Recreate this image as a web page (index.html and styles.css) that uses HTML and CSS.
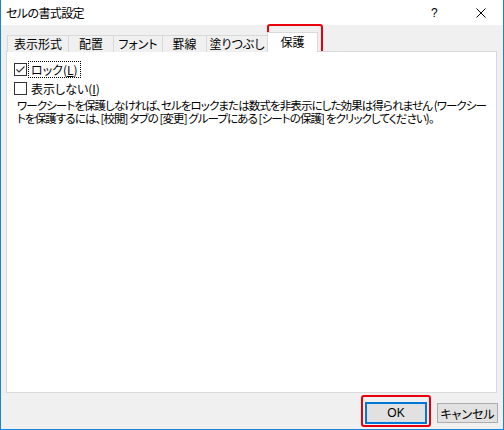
FILE: index.html
```html
<!DOCTYPE html>
<html lang="ja">
<head>
<meta charset="utf-8">
<title>セルの書式設定</title>
<link rel="stylesheet" href="styles.css">
</head>
<body>
<div class="dialog">
  <div class="titlebar">
    <span class="title">セルの書式設定</span>
    <span class="help">?</span>
    <span class="close"><svg width="10" height="10" viewBox="0 0 10 10"><path d="M0.5 0.5 L9.5 9.5 M9.5 0.5 L0.5 9.5" stroke="#000" stroke-width="1" fill="none"/></svg></span>
  </div>
  <div class="content">
    <div class="tabs">
      <div class="tab t1">表示形式</div>
      <div class="tab t2">配置</div>
      <div class="tab t3">フォント</div>
      <div class="tab t4">罫線</div>
      <div class="tab t5">塗りつぶし</div>
      <div class="tab t6 active">保護</div>
    </div>
    <div class="panel">
      <div class="check-row first">
        <span class="box"><svg width="11" height="11" viewBox="0 0 11 11"><path d="M1.5 5.5 L4 8 L9.5 2.5" stroke="#333" stroke-width="1.1" fill="none"/></svg></span>
        <span class="label focus">ロック(<u>L</u>)</span>
      </div>
      <div class="check-row second">
        <span class="box"></span>
        <span class="label">表示しない(<u>I</u>)</span>
      </div>
      <p class="note"><span class="line">ワークシートを保護しなければ、セルをロックまたは数式を非表示にした効果は得られません (ワークシー</span><span class="line">トを保護するには、[校閲] タブの [変更] グループにある [シートの保護] をクリックしてください)。</span></p>
    </div>
    <div class="footer">
      <button class="btn ok">OK</button>
      <button class="btn cancel">キャンセル</button>
    </div>
  </div>
  <div class="mark mark-tab"></div>
  <div class="mark mark-lock"></div>
  <div class="mark mark-ok"></div>
</div>
</body>
</html>
```
FILE: styles.css
```css
* { box-sizing: border-box; }
html, body { margin: 0; padding: 0; background: #fff; }
body {
  font-family: "Noto Sans CJK JP", "Noto Sans", sans-serif;
  font-size: 12px;
  color: #000;
  font-feature-settings: "palt";
}
.dialog {
  position: relative;
  width: 504px;
  height: 430px;
  border-left: 1px solid #1883d7;
  border-right: 1px solid #1883d7;
  border-bottom: 1px solid #1883d7;
  background: #f0f0f0;
  overflow: hidden;
}
.titlebar {
  height: 25px;
  background: #fff;
  display: flex;
  align-items: center;
}
.title {
  padding-left: 5px;
  font-size: 12px;
  line-height: 25px;
  flex: 1;
  padding-bottom: 1px;
  letter-spacing: -0.6px;
}
.help {
  width: 12px;
  font-family: "Liberation Sans", sans-serif;
  font-size: 12px;
  margin-right: 33px;
}
.close {
  display: flex;
  margin-right: 17px;
}
.content {
  padding: 7px 6px 0 5px;
}
.tabs {
  display: flex;
  align-items: flex-end;
  height: 20px;
  padding-left: 1px;
  position: relative;
  z-index: 2;
}
.tab {
  height: 17px;
  border: 1px solid #d9d9d9;
  border-bottom: none;
  background: #f0f0f0;
  margin-left: -1px;
  display: flex;
  align-items: center;
  justify-content: center;
  font-size: 12px;
  line-height: 16px;
}
.tab.t1 { margin-left: 0; width: 62px; }
.tab.t2 { width: 46px; }
.tab.t3 { width: 50px; }
.tab.t4 { width: 45px; }
.tab.t5 { width: 62px; }
.tab.t6 { width: 51px; }
.tab.active {
  height: 20px;
  background: #fff;
  padding-bottom: 1px;
}
.panel {
  position: relative;
  z-index: 1;
  margin-top: -1px;
  height: 342px;
  background: #fff;
  border: 1px solid #d9d9d9;
  padding: 10px 0 0 7px;
}
.check-row {
  display: flex;
  align-items: center;
  height: 15px;
}
.check-row.second { margin-top: 4px; }
.box {
  width: 13px;
  height: 13px;
  border: 1px solid #333;
  background: #fff;
  display: flex;
  align-items: center;
  justify-content: center;
}
.label {
  font-size: 12px;
  line-height: 13px;
  margin-left: 2px;
  padding: 0 2px;
}
.label u { text-decoration: underline; text-underline-offset: 1px; }
.check-row.second .label { margin-left: 4px; padding: 0; }
.focus {
  outline: 1px dotted #000;
  outline-offset: 0;
  height: 15px;
  line-height: 15px;
}
.note {
  margin: 3px 0 0 3px;
  font-size: 11.5px;
  white-space: nowrap;
  letter-spacing: -0.9px;
}
.line {
  display: block;
  height: 13px;
  line-height: 13px;
}
.footer {
  display: flex;
  justify-content: flex-end;
  align-items: center;
  gap: 10px;
  padding-top: 9px;
  padding-right: 0;
}
.btn {
  font-family: "Noto Sans CJK JP", "Noto Sans", sans-serif;
  font-feature-settings: "palt";
  font-size: 12px;
  background: #e1e1e1;
  color: #000;
  padding: 0;
  margin: 0;
}
.btn.ok {
  width: 62px;
  height: 22px;
  border: 2px solid #0078d7;
  font-family: "Liberation Sans", sans-serif;
}
.btn.cancel {
  width: 61px;
  height: 20px;
  border: 1px solid #adadad;
  margin-right: -1px;
}
.mark {
  position: absolute;
  border: 2px solid #e8000b;
  border-radius: 3px;
}
.mark-tab { left: 266px; top: 24px; width: 56px; height: 38px; }
.mark-lock { left: 8px; top: 54px; width: 66px; height: 24px; }
.mark-ok { left: 360px; top: 395px; width: 70px; height: 32px; }
```
